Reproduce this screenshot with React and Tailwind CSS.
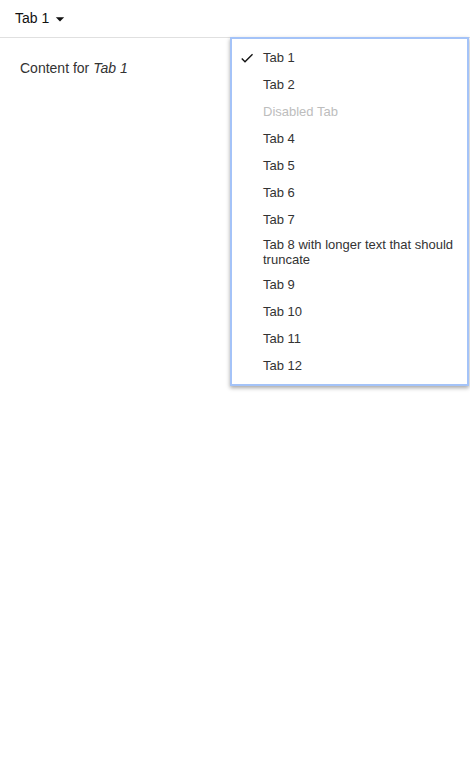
import React, { useState } from 'react';

const tabs = [
  { id: 1, label: 'Tab 1' },
  { id: 2, label: 'Tab 2' },
  { id: 3, label: 'Disabled Tab', disabled: true },
  { id: 4, label: 'Tab 4' },
  { id: 5, label: 'Tab 5' },
  { id: 6, label: 'Tab 6' },
  { id: 7, label: 'Tab 7' },
  { id: 8, label: 'Tab 8 with longer text that should truncate' },
  { id: 9, label: 'Tab 9' },
  { id: 10, label: 'Tab 10' },
  { id: 11, label: 'Tab 11' },
  { id: 12, label: 'Tab 12' },
];

const App = () => {
  const [selected, setSelected] = useState(1);
  const [open, setOpen] = useState(true);
  const current = tabs.find((t) => t.id === selected);

  return (
    <div className="relative min-h-[768px] bg-white text-[#202124] font-['Liberation_Sans',Arial,sans-serif]">
      <div className="h-[38px] border-b border-[#e0e0e0] flex items-center">
        <button onClick={() => setOpen(!open)} className="flex items-center pl-[15px] text-[14px] text-[#111]">
          <span>{current.label}</span>
          <svg viewBox="0 0 24 24" className="w-[20px] h-[20px] ml-[1px]" fill="currentColor">
            <path d="M7 10l5 5 5-5z" />
          </svg>
        </button>
      </div>

      <div className="px-[20px] pt-[20px] text-[14px] text-[#333]">
        Content for <i>{current.label}</i>
      </div>

      {open && (
        <div className="absolute top-[37px] left-[230px] w-[239px] bg-white border-2 border-[#a4c3f8] shadow-[0_2px_4px_rgba(0,0,0,0.35)] py-[5px]">
          {tabs.map((tab) => (
            <div
              key={tab.id}
              onClick={() => !tab.disabled && setSelected(tab.id)}
              className={`flex items-center min-h-[27px] py-[4px] pr-[12px] text-[13px] leading-[15px] ${tab.disabled ? 'text-[#bdbdbd]' : 'text-[#333] cursor-pointer'}`}
            >
              <span className="w-[31px] shrink-0 flex justify-end pr-[8px]">
                {tab.id === selected && (
                  <svg viewBox="0 0 24 24" className="w-[16px] h-[16px]" fill="#111">
                    <path d="M9 16.17L4.83 12l-1.42 1.41L9 19 21 7l-1.41-1.41z" />
                  </svg>
                )}
              </span>
              <span>{tab.label}</span>
            </div>
          ))}
        </div>
      )}
    </div>
  );
};

export default App;
